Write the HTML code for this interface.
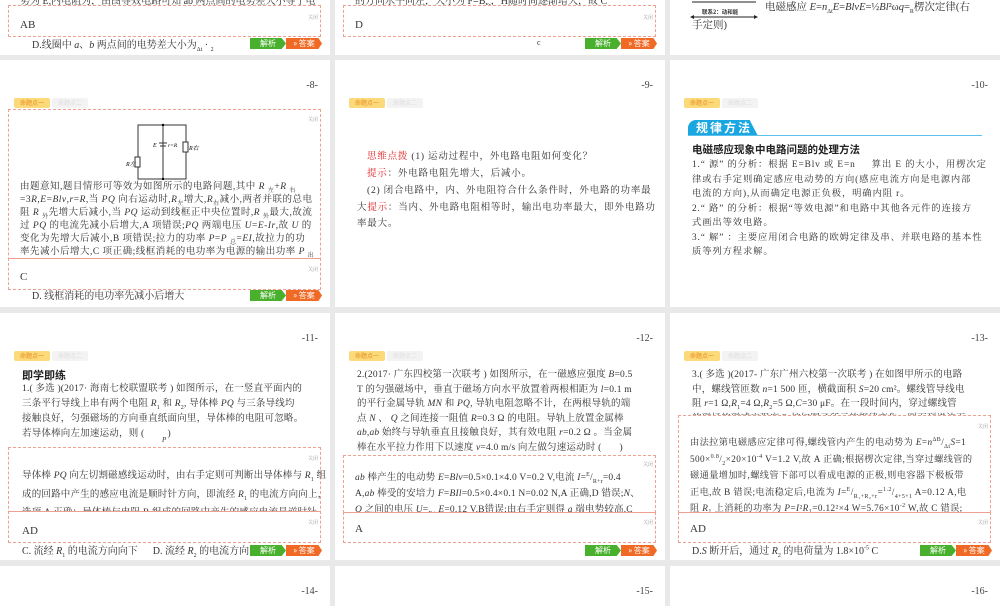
<!DOCTYPE html>
<html><head><meta charset="utf-8">
<style>
*{margin:0;padding:0;box-sizing:border-box}
body{width:1000px;height:600px;background:#e9e9e9;position:relative;overflow:hidden;font-family:"Liberation Serif","Noto Serif CJK SC","Noto Sans CJK SC",serif;color:#333}
.p{position:absolute;background:#fff;overflow:hidden}
.a{position:absolute;white-space:nowrap}
.pn{position:absolute;right:12px;top:20px;font-size:10px;color:#444}
.t1{position:absolute;left:14px;top:38px;width:36px;height:10px;background:#fcd979;border-radius:2px;font-size:6px;color:#e58a1f;text-align:center;line-height:10px;font-family:"Noto Sans CJK SC",sans-serif}
.t2{position:absolute;left:52px;top:38px;width:36px;height:10px;background:#f3f3f3;border-radius:2px;font-size:6px;color:#ddd;text-align:center;line-height:10px;font-family:"Noto Sans CJK SC",sans-serif}
.box{position:absolute;border:1px dashed #f0a090;background:#fff}
.cl{position:absolute;right:8px;font-size:5px;color:#999}
.bg{position:absolute;width:36px;height:11px;background:#48b02c;color:#fff;font-size:8px;text-align:center;line-height:11px;clip-path:polygon(0 0,88% 0,100% 50%,88% 100%,0 100%);font-family:"Noto Sans CJK SC",sans-serif}
.bo{position:absolute;width:36px;height:11px;background:#f06a25;color:#fff;font-size:8px;text-align:center;line-height:11px;clip-path:polygon(0 0,90% 0,100% 50%,90% 100%,0 100%);font-family:"Noto Sans CJK SC",sans-serif}
.tx{position:absolute;font-size:9.5px;line-height:13px;letter-spacing:0.2px;color:#333;white-space:nowrap}
sub,sup{line-height:0;font-size:6px}
i{font-style:italic}
</style></head><body>

<!-- Row 1 -->
<div class="p" style="left:0;top:0;width:330px;height:55px">
 <div class="a" style="left:20px;top:-8px;font-size:10px">势为 E,内电阻为，由图等效电路可知 ab 两点间的电势差大小等于电</div>
 <div class="box" style="left:8px;top:5px;width:313px;height:32px"></div>
 <div class="cl" style="top:14px;right:12px">关闭</div>
 <div class="a" style="left:20px;top:19px;font-size:11px">AB</div>
 <div class="a" style="left:32px;top:36px;font-size:10px">D.线圈中 <i>a</i>、<i>b</i> 两点间的电势差大小为<sub>Δt</sub> · <sub>2</sub></div>
 <div class="bg" style="left:250px;top:38px">解析</div><div class="bo" style="left:286px;top:38px">» 答案</div>
</div>
<div class="p" style="left:335px;top:0;width:330px;height:55px">
 <div class="a" style="left:20px;top:-8px;font-size:10px">的方向水平向左，大小为 F=B<sub>Fr</sub>，H随时间逐渐增大，故 C</div>
 <div class="box" style="left:8px;top:5px;width:313px;height:32px"></div>
 <div class="cl" style="top:14px;right:12px">关闭</div>
 <div class="a" style="left:20px;top:19px;font-size:11px">D</div>
 <div class="a" style="left:202px;top:38px;font-size:8px">c</div>
 <div class="bg" style="left:250px;top:38px">解析</div><div class="bo" style="left:286px;top:38px">» 答案</div>
</div>
<div class="p" style="left:670px;top:0;width:330px;height:55px">
 <svg class="a" style="left:20px;top:0" width="70" height="20"><line x1="2" y1="2" x2="66" y2="2" stroke="#222" stroke-width="1"/><line x1="2" y1="17" x2="66" y2="17" stroke="#222"/><polygon points="0,17 4,15 4,19" fill="#222"/><polygon points="68,17 64,15 64,19" fill="#222"/></svg>
 <div class="a" style="left:32px;top:8px;font-size:5.5px;font-weight:bold;font-family:'Noto Sans CJK SC',sans-serif">联系2：动和能</div>
 <div class="a" style="left:95px;top:-1px;font-size:10.5px">电磁感应 <i>E</i>=<i>n</i><sub>Δt</sub><i>E</i>=<i>BlvE</i>=½<i>Bl</i>²ω<i>q</i>=<sub>R</sub>楞次定律(右</div>
 <div class="a" style="left:22px;top:17px;font-size:10.5px">手定则)</div>
</div>

<!-- Row 2 -->
<div class="p" style="left:0;top:60px;width:330px;height:247px">
 <div class="pn">-8-</div>
 <div class="t1">命题点一</div><div class="t2">命题点二</div>
 <div class="box" style="left:8px;top:49px;width:313px;height:181px"></div>
 <div class="cl" style="top:56px;right:12px">关闭</div>
 <svg class="a" style="left:125px;top:63px" width="80" height="60">
  <rect x="13" y="2" width="48" height="54" fill="none" stroke="#333"/>
  <line x1="38" y1="2" x2="38" y2="56" stroke="#333"/>
  <rect x="10" y="34" width="5" height="10" fill="#fff" stroke="#333"/>
  <rect x="58" y="19" width="5" height="10" fill="#fff" stroke="#333"/>
  <line x1="34" y1="20" x2="42" y2="20" stroke="#333"/><line x1="35" y1="23" x2="41" y2="23" stroke="#333"/>
  <text x="28" y="24" font-size="6" font-style="italic">E</text><text x="43" y="24" font-size="5.5" font-style="italic">r=R</text>
  <text x="64" y="27" font-size="6" font-style="italic">R右</text><text x="1" y="43" font-size="6" font-style="italic">R左</text>
  <circle cx="38" cy="2" r="1.2"/><circle cx="38" cy="56" r="1.2"/>
 </svg>
 <div class="tx" style="left:20px;top:121px;letter-spacing:0.5px">由题意知,题目情形可等效为如图所示的电路问题,其中 <i>R</i> <sub>左</sub>+<i>R</i> <sub>右</sub><br>=3<i>R</i>,<i>E</i>=<i>Blv</i>,<i>r</i>=<i>R</i>,当 <i>PQ</i> 向右运动时,<i>R</i><sub>左</sub>增大,<i>R</i><sub>右</sub>减小,两者并联的总电<br>阻 <i>R</i> <sub>外</sub>先增大后减小,当 <i>PQ</i> 运动到线框正中央位置时,<i>R</i> <sub>外</sub>最大,故流<br>过 <i>PQ</i> 的电流先减小后增大,A 项错误;<i>PQ</i> 两端电压 <i>U</i>=<i>E</i>-<i>Ir</i>,故 <i>U</i> 的<br>变化为先增大后减小,B 项错误;拉力的功率 <i>P</i>=<i>P</i> <sub>总</sub>=<i>EI</i>,故拉力的功<br>率先减小后增大,C 项正确;线框消耗的电功率为电源的输出功率 <i>P</i> <sub>出</sub></div>
 <div class="box" style="left:8px;top:198px;width:313px;height:32px;border-top:1px solid #f0a090"></div>
 <div class="cl" style="top:206px;right:12px">关闭</div>
 <div class="a" style="left:20px;top:211px;font-size:11px">C</div>
 <div class="a" style="left:32px;top:227px;font-size:10px">D. 线框消耗的电功率先减小后增大</div>
 <div class="bg" style="left:250px;top:230px">解析</div><div class="bo" style="left:286px;top:230px">» 答案</div>
</div>
<div class="p" style="left:335px;top:60px;width:330px;height:247px">
 <div class="pn">-9-</div>
 <div class="t1">命题点一</div><div class="t2">命题点二</div>
 <div class="tx" style="left:32px;top:89px;line-height:17px;letter-spacing:0.8px"><span style="color:#e02020">思维点拨</span> (1) 运动过程中，外电路电阻如何变化？<br><span style="color:#e02020">提示</span>：外电路电阻先增大，后减小。<br>(2) 闭合电路中，内、外电阻符合什么条件时，外电路的功率最</div>
 <div class="tx" style="left:22px;top:140px;line-height:16px;letter-spacing:0.8px">大<span style="color:#e02020">提示</span>：当内、外电路电阻相等时，输出电功率最大，即外电路功<br>率最大。</div>
</div>
<div class="p" style="left:670px;top:60px;width:330px;height:247px">
 <div class="pn">-10-</div>
 <div class="t1">命题点一</div><div class="t2">命题点二</div>
 <div class="a" style="left:18px;top:60px;width:70px;height:16px;background:#1aa6e0;border-radius:8px 8px 0 0;clip-path:polygon(0 0,88% 0,100% 100%,0 100%);color:#fff;font-size:12px;font-weight:bold;line-height:16px;padding-left:8px;letter-spacing:2px;font-family:'Noto Sans CJK SC',sans-serif">规律方法</div>
 <div class="a" style="left:18px;top:75px;width:294px;height:1px;background:#5cc0ec"></div>
 <div class="a" style="left:22px;top:82px;font-size:10.5px;font-weight:bold;font-family:'Noto Sans CJK SC',sans-serif;color:#222">电磁感应现象中电路问题的处理方法</div>
 <div class="tx" style="left:22px;top:98px;line-height:14.5px;letter-spacing:0.9px;font-size:9.3px">1.“ 源” 的分析：根据 E=Blv 或 E=n &nbsp;&nbsp;&nbsp;&nbsp;算出 E 的大小，用楞次定<br>律或右手定则确定感应电动势的方向(感应电流方向是电源内部<br>电流的方向),从而确定电源正负极，明确内阻 r。<br>2.“ 路” 的分析：根据“等效电源”和电路中其他各元件的连接方<br>式画出等效电路。<br>3.“ 解” ：主要应用闭合电路的欧姆定律及串、并联电路的基本性<br>质等列方程求解。</div>
</div>

<!-- Row 3 -->
<div class="p" style="left:0;top:313px;width:330px;height:247px">
 <div class="pn">-11-</div>
 <div class="t1">命题点一</div><div class="t2">命题点二</div>
 <div class="a" style="left:22px;top:54px;font-size:11px;font-weight:bold;font-family:'Noto Sans CJK SC',sans-serif;color:#222">即学即练</div>
 <div class="tx" style="left:22px;top:69px;line-height:15px">1.( 多选 )(2017· 海南七校联盟联考 ) 如图所示，在一竖直平面内的<br>三条平行导线上串有两个电阻 <i>R</i><sub>1</sub> 和 <i>R</i><sub>2</sub>, 导体棒 <i>PQ</i> 与三条导线均<br>接触良好，匀强磁场的方向垂直纸面向里，导体棒的电阻可忽略。<br>若导体棒向左加速运动，则 ( &nbsp;&nbsp;&nbsp;&nbsp;&nbsp;&nbsp;&nbsp;&nbsp;)</div>
 <div class="a" style="left:162px;top:123px;font-size:7px"><i>P</i></div>
 <div class="box" style="left:8px;top:134px;width:313px;height:96px"></div>
 <div class="cl" style="top:142px;right:12px">关闭</div>
 <div class="tx" style="left:22px;top:154px;line-height:18.5px;height:44px;overflow:hidden">导体棒 <i>PQ</i> 向左切割磁感线运动时，由右手定则可判断出导体棒与 <i>R</i><sub>1</sub> 组<br>成的回路中产生的感应电流是顺时针方向，即流经 <i>R</i><sub>1</sub> 的电流方向向上，<br>选项 A 正确；导体棒与电阻 R 组成的回路中产生的感应电流是逆时针</div>
 <div class="box" style="left:8px;top:198px;width:313px;height:32px;border-top:1px solid #f0a090"></div>
 <div class="cl" style="top:206px;right:12px">关闭</div>
 <div class="a" style="left:22px;top:212px;font-size:11px">AD</div>
 <div class="a" style="left:22px;top:229px;font-size:10px">C. 流经 <i>R</i><sub>1</sub> 的电流方向向下 &nbsp;&nbsp;&nbsp;&nbsp;&nbsp;D. 流经 <i>R</i><sub>2</sub> 的电流方向</div>
 <div class="bg" style="left:250px;top:232px">解析</div><div class="bo" style="left:286px;top:232px">» 答案</div>
</div>
<div class="p" style="left:335px;top:313px;width:330px;height:247px">
 <div class="pn">-12-</div>
 <div class="t1">命题点一</div><div class="t2">命题点二</div>
 <div class="tx" style="left:22px;top:55px;line-height:14.5px">2.(2017· 广东四校第一次联考 ) 如图所示，在一磁感应强度 <i>B</i>=0.5<br>T 的匀强磁场中，垂直于磁场方向水平放置着两根相距为 <i>l</i>=0.1 m<br>的平行金属导轨 <i>MN</i> 和 <i>PQ</i>, 导轨电阻忽略不计，在两根导轨的端<br>点 <i>N</i> 、 <i>Q</i> 之间连接一阻值 <i>R</i>=0.3 Ω 的电阻。导轨上放置金属棒<br><i>ab</i>,<i>ab</i> 始终与导轨垂直且接触良好，其有效电阻 <i>r</i>=0.2 Ω 。当金属<br>棒在水平拉力作用下以速度 <i>v</i>=4.0 m/s 向左做匀速运动时 ( &nbsp;&nbsp;&nbsp;&nbsp;&nbsp;&nbsp;)</div>
 <div class="box" style="left:8px;top:142px;width:313px;height:88px"></div>
 <div class="cl" style="top:148px;right:12px">关闭</div>
 <div class="tx" style="left:20px;top:157px;line-height:16px;height:44px;overflow:hidden"><i>ab</i> 棒产生的电动势 <i>E</i>=<i>Blv</i>=0.5×0.1×4.0 V=0.2 V,电流 <i>I</i>=<sup>E</sup>/<sub>R+r</sub>=0.4<br>A,<i>ab</i> 棒受的安培力 <i>F</i>=<i>BIl</i>=0.5×0.4×0.1 N=0.02 N,A 正确,D 错误;<i>N</i>、<br><i>Q</i> 之间的电压 <i>U</i>=<sub>R+r</sub><i>E</i>=0.12 V,B错误;由右手定则得 <i>a</i> 端电势较高,C</div>
 <div class="box" style="left:8px;top:199px;width:313px;height:31px;border-top:1px solid #f0a090"></div>
 <div class="cl" style="top:206px;right:12px">关闭</div>
 <div class="a" style="left:20px;top:210px;font-size:11px">A</div>
 <div class="bg" style="left:250px;top:232px">解析</div><div class="bo" style="left:286px;top:232px">» 答案</div>
</div>
<div class="p" style="left:670px;top:313px;width:330px;height:247px">
 <div class="pn">-13-</div>
 <div class="t1">命题点一</div><div class="t2">命题点二</div>
 <div class="tx" style="left:22px;top:55px;line-height:14.5px;height:47px;overflow:hidden">3.( 多选 )(2017- 广东广州六校第一次联考 ) 在如图甲所示的电路<br>中，螺线管匝数 <i>n</i>=1 500 匝，横截面积 <i>S</i>=20 cm²。螺线管导线电<br>阻 <i>r</i>=1 Ω,<i>R</i><sub>1</sub>=4 Ω,<i>R</i><sub>2</sub>=5 Ω,<i>C</i>=30 μF。在一段时间内，穿过螺线管<br>的磁场的磁感应强度 B 按如图乙所示的规律变化，则下列说法正</div>
 <div class="box" style="left:8px;top:102px;width:313px;height:128px"></div>
 <div class="cl" style="top:110px;right:12px">关闭</div>
 <div class="tx" style="left:20px;top:121px;line-height:16.5px;height:78px;overflow:hidden;font-size:9.2px;letter-spacing:0.4px">由法拉第电磁感应定律可得,螺线管内产生的电动势为 <i>E</i>=<i>n</i><sup>ΔB</sup>/<sub>Δt</sub><i>S</i>=1<br>500×<sup>0.8</sup>/<sub>2</sub>×20×10<sup>-4</sup> V=1.2 V,故 A 正确;根据楞次定律,当穿过螺线管的<br>磁通量增加时,螺线管下部可以看成电源的正极,则电容器下极板带<br>正电,故 B 错误;电流稳定后,电流为 <i>I</i>=<sup>E</sup>/<sub>R₁+R₂+r</sub>=<sup>1.2</sup>/<sub>4+5+1</sub> A=0.12 A,电<br>阻 <i>R</i>₁ 上消耗的功率为 <i>P</i>=<i>I</i>²<i>R</i>₁=0.12²×4 W=5.76×10<sup>-2</sup> W,故 C 错误;</div>
 <div class="box" style="left:8px;top:199px;width:313px;height:31px;border-top:1px solid #f0a090"></div>
 <div class="cl" style="top:206px;right:12px">关闭</div>
 <div class="a" style="left:20px;top:210px;font-size:11px">AD</div>
 <div class="a" style="left:22px;top:229px;font-size:10px">D.<i>S</i> 断开后，通过 <i>R</i><sub>2</sub> 的电荷量为 1.8×10<sup>-5</sup> C</div>
 <div class="bg" style="left:250px;top:232px">解析</div><div class="bo" style="left:286px;top:232px">» 答案</div>
</div>

<!-- Row 4 -->
<div class="p" style="left:0;top:566px;width:330px;height:40px"><div class="pn">-14-</div></div>
<div class="p" style="left:335px;top:566px;width:330px;height:40px"><div class="pn">-15-</div></div>
<div class="p" style="left:670px;top:566px;width:330px;height:40px"><div class="pn">-16-</div></div>
</body></html>
